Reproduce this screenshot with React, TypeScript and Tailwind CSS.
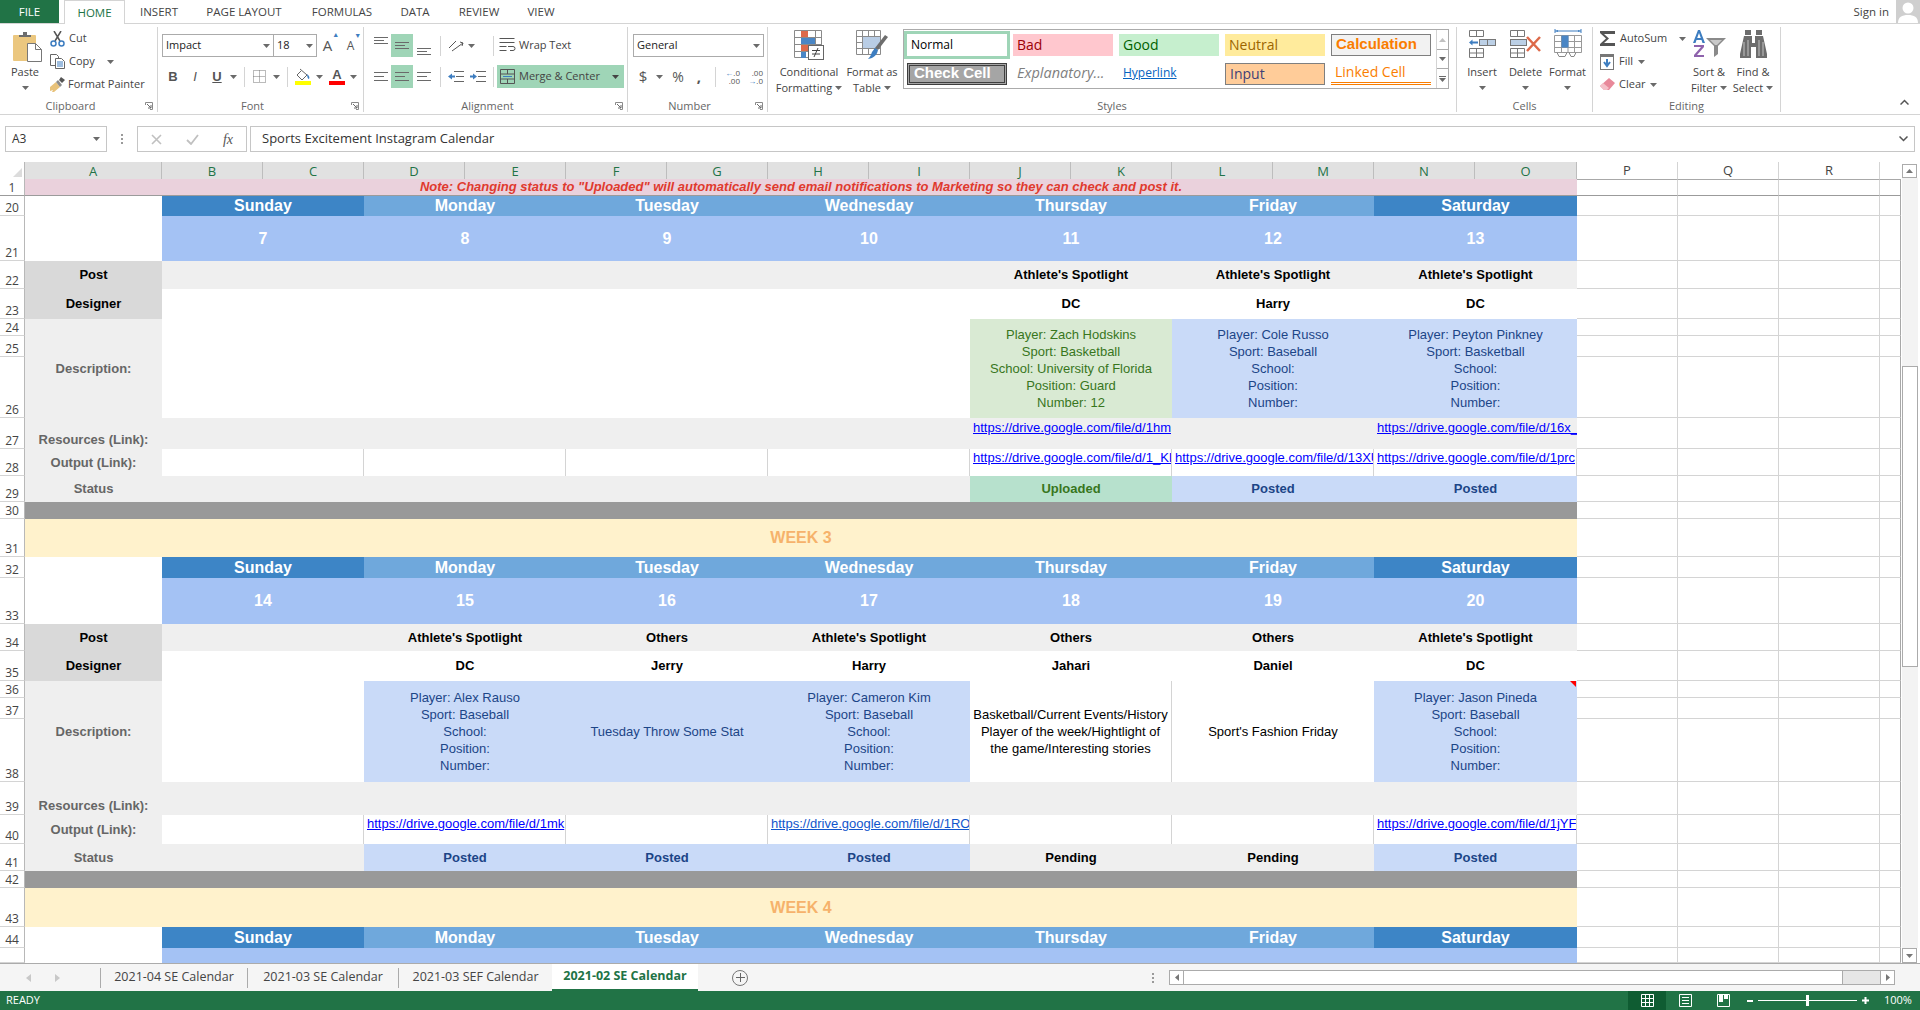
import { Fragment, type ReactNode } from 'react';

const Caret = ({ color = '#6a6a6a' }: { color?: string }) => (
  <svg width="7" height="4" viewBox="0 0 7 4" className="shrink-0">
    <path d="M0 0h7L3.5 4z" fill={color} />
  </svg>
);

const Launcher = () => (
  <svg width="8" height="8" viewBox="0 0 8 8">
    <path d="M.5 3V.5H7.5V7.5H5" fill="none" stroke="#8a8a8a" />
    <path d="M2 2l4 4M6 3v3H3" fill="none" stroke="#6a6a6a" />
  </svg>
);

const Group = ({ label, width, launcher, children }: { label: string; width: string; launcher?: boolean; children: ReactNode }) => (
  <div className={`${width} h-[85px] shrink-0 flex flex-col border-r border-[#d4d4d4]`}>
    <div className="flex-1 min-h-0 flex">{children}</div>
    <div className="h-[13px] flex items-center text-[11px] leading-[13px] text-[#666]">
      <span className="flex-1 text-center">{label}</span>
      {launcher && <span className="w-[16px] flex justify-end pr-[4px]"><Launcher /></span>}
    </div>
  </div>
);

const Big = ({ icon, lines, width }: { icon: ReactNode; lines: [string, string?]; width: string }) => (
  <div className={`${width} shrink-0 flex flex-col items-center text-[11px] leading-[16px] text-[#444]`}>
    <div className="h-[37px] pt-[3px] flex justify-center">{icon}</div>
    <div className="whitespace-nowrap">{lines[0]}</div>
    <div className="h-[16px] flex items-center gap-[3px] whitespace-nowrap">
      {lines[1]}
      <Caret />
    </div>
  </div>
);

const AlignLines = ({ rows }: { rows: [number, number][] }) => (
  <svg width="14" height="12" viewBox="0 0 14 12">
    {rows.map(([x, y], i) => (
      <rect key={i} x={x} y={y} width={14 - (i === 1 && x === 0 ? 4 : 0)} height="1" fill="#6a6a6a" />
    ))}
  </svg>
);

const ICONS = {
  paste: (
    <svg width="29" height="30" viewBox="0 0 29 30">
      <rect x="0" y="3" width="23" height="26" rx="1" fill="#ebc77f" />
      <path d="M6 5V3h4V0h4v3h4v2z" fill="#6d6d6d" />
      <path d="M14.5 11.5h8l6 6v12h-14z" fill="#fff" stroke="#777" />
      <path d="M22.5 11.5v6h6" fill="none" stroke="#777" />
    </svg>
  ),
  cut: (
    <svg width="15" height="16" viewBox="0 0 15 16">
      <path d="M4 0l6 10M11 0L5 10" stroke="#555" strokeWidth="1.5" fill="none" />
      <circle cx="3.5" cy="12.5" r="2.5" fill="none" stroke="#3d7dc0" strokeWidth="1.5" />
      <circle cx="11.5" cy="12.5" r="2.5" fill="none" stroke="#3d7dc0" strokeWidth="1.5" />
    </svg>
  ),
  copy: (
    <svg width="15" height="15" viewBox="0 0 15 15">
      <path d="M.5.5h6l2 2v9H.5z" fill="#fff" stroke="#666" />
      <path d="M5.5 4.5h6l3 3v7h-9z" fill="#fff" stroke="#666" />
      <path d="M7 8h6M7 10h6M7 12h6" stroke="#3d7dc0" />
    </svg>
  ),
  painter: (
    <svg width="15" height="15" viewBox="0 0 15 15">
      <path d="M0 10l6-5 4 5-6 5H2l1-2-3 1z" fill="#e8c27a" />
      <path d="M6 5l4 5 2-2-4-5z" fill="#8a8a8a" />
      <path d="M9 3l2-3 4 3-3 3z" fill="#555" />
    </svg>
  ),
  cond: (
    <svg width="30" height="30" viewBox="0 0 30 30">
      <path d="M.5.5h27v27H.5zM.5 7.5h27M.5 14.5h27M.5 21.5h27M7.5.5v27M21.5.5v27" fill="#fff" stroke="#8a8a8a" />
      <rect x="7" y="1" width="7" height="6" fill="#dd6a4a" />
      <rect x="7" y="8" width="14" height="6" fill="#4a86c5" />
      <rect x="7" y="15" width="10" height="6" fill="#dd6a4a" />
      <rect x="7" y="22" width="5" height="6" fill="#4a86c5" />
      <rect x="14.5" y="15.5" width="15" height="14" fill="#fff" stroke="#666" />
      <path d="M18 20.5h8M18 24h8M24 18l-4 9" stroke="#444" fill="none" />
    </svg>
  ),
  table: (
    <svg width="32" height="30" viewBox="0 0 32 30">
      <path d="M.5.5h24v24H.5zM.5 6.5h24M.5 12.5h24M.5 18.5h24M6.5.5v24M12.5.5v24M18.5.5v24" fill="#fff" stroke="#8a8a8a" />
      <rect x="7" y="7" width="17" height="11" fill="#b9cde5" />
      <path d="M29 5l3 2-10 13-3-2z" fill="#6d6d6d" />
      <path d="M19 18l3 2c-1 5-4 8-10 9 2-2 3-4 4-7z" fill="#3d7dc0" />
    </svg>
  ),
  insert: (
    <svg width="28" height="28" viewBox="0 0 28 28">
      <path d="M1.5.5h14v6h-14zM8.5.5v6M1.5 18.5h14v9h-14zM8.5 18.5v9M1.5 23h14" fill="#fff" stroke="#777" />
      <rect x="11.5" y="9.5" width="16" height="6" fill="#bcd0e6" stroke="#777" />
      <path d="M19.5 9.5v6" stroke="#777" />
      <path d="M1 12.5l3.5-3v2H10v2H4.500v2z" fill="#3d7dc0" />
    </svg>
  ),
  del: (
    <svg width="31" height="28" viewBox="0 0 31 28">
      <path d="M.5.5h14v6H.5zM7.500.5v6M.5 18.500h14v9H.5zM7.500 18.500v9M.5 23h14" fill="#fff" stroke="#777" />
      <rect x=".5" y="9.500" width="16" height="6" fill="#bcd0e6" stroke="#777" />
      <path d="M17 7l13 14M30 7L17 21" stroke="#dd6a4a" strokeWidth="2.500" />
    </svg>
  ),
  format: (
    <svg width="28" height="30" viewBox="0 0 28 30">
      <path d="M1 3h26M1 1v4M27 1v4" stroke="#3d7dc0" />
      <path d="M4 2L1.500 3 4 4zM24 2l2.500 1L24 4z" fill="#3d7dc0" />
      <path d="M.5 7.500h27v17H.5zM.5 13.500h27M.5 19.500h27M7.500 7.500v17M20.500 7.500v17M14 7.500v17" fill="#fff" stroke="#999" />
      <rect x="7.500" y="7.500" width="7" height="12" fill="#4a86c5" />
      <path d="M3 24.500l2 4h6l2-4M15 24.500l2 4h3l2-4" fill="none" stroke="#888" />
    </svg>
  ),
  sort: (
    <svg width="33" height="28" viewBox="0 0 33 28">
      <path d="M0 13L5 0h2l5 13H9.500l-1-3h-5l-1 3zM4.200 8h3.600L6 3z" fill="#3d7dc0" />
      <path d="M1 15h10v2L4 25h7v2H1v-2l7-8H1z" fill="#8e62ac" />
      <path d="M13 8h20l-8 8v8l-4 3V16z" fill="#8a8a8a" />
      <path d="M17 10h12l-5 5h-2z" fill="#c9c9c9" />
    </svg>
  ),
  find: (
    <svg width="27" height="28" viewBox="0 0 27 28">
      <path d="M5 0h6v5H5zM16 0h6v5h-6zM4 6h8v7h3V6h8l4 18v4H16V17h-5v11H0v-4z" fill="#6d6d6d" />
      <path d="M4 12v14M8 10v16M19 10v16M23 12v14" stroke="#fff" strokeWidth=".6" />
    </svg>
  ),
};

const styleBase = 'h-[22px] flex items-center pl-[4px] pb-[2px] whitespace-nowrap overflow-hidden';

const Ribbon = () => (
  <div className="h-[91px] shrink-0 flex pt-[3px] border-b border-[#d4d4d4] font-['Open_Sans',sans-serif]">
    <Group label="Clipboard" width="w-[158px]" launcher>
      <div className="w-[50px] flex flex-col items-center text-[11px] text-[#444]">
        <div className="h-[37px] pt-[5px] pl-[4px]">{ICONS.paste}</div>
        <div className="leading-[16px]">Paste</div>
        <div className="h-[16px] flex items-center"><Caret /></div>
      </div>
      <div className="flex flex-col text-[11px] text-[#444]">
        <div className="h-[23px] flex items-center gap-[4px]">{ICONS.cut} Cut</div>
        <div className="h-[23px] flex items-center gap-[4px]">{ICONS.copy} Copy <span className="ml-[8px]"><Caret /></span></div>
        <div className="h-[23px] flex items-center gap-[3px]">{ICONS.painter} Format Painter</div>
      </div>
    </Group>

    <Group label="Font" width="w-[206px]" launcher>
      <div className="flex flex-col pt-[7px] pl-[4px]">
        <div className="h-[23px] flex items-center">
          <div className="w-[112px] h-full border border-[#ababab] flex items-center justify-between px-[3px] text-[11px] text-[#222]">Impact <Caret /></div>
          <div className="w-[43px] h-full border border-l-0 border-[#ababab] flex items-center justify-between px-[3px] text-[11px] text-[#222]">18 <Caret /></div>
          <span className="ml-[3px] w-[22px] flex justify-center text-[15px] leading-none text-[#555]">A<sup className="text-[7px] text-[#3d7dc0]">▲</sup></span>
          <span className="w-[24px] flex justify-center text-[12px] leading-none text-[#555]">A<sup className="text-[7px] text-[#3d7dc0]">▼</sup></span>
        </div>
        <div className="h-[23px] mt-[8px] flex items-center text-[13px] text-[#555] font-['Liberation_Sans',sans-serif]">
          <span className="w-[22px] text-center font-bold">B</span>
          <span className="w-[22px] text-center italic">I</span>
          <span className="w-[22px] text-center underline font-bold">U</span>
          <span className="w-[16px] pl-[2px]"><Caret /></span>
          <span className="w-[1px] h-[20px] bg-[#d4d4d4] mr-[8px]" />
          <svg width="13" height="13" viewBox="0 0 13 13"><path d="M.5.500h12v12H.500zM6.500.500v12M.5 6.500h12" fill="none" stroke="#777" strokeDasharray="1 1" /></svg>
          <span className="w-[21px] pl-[7px]"><Caret /></span>
          <span className="w-[1px] h-[20px] bg-[#d4d4d4] mr-[7px]" />
          <svg width="16" height="17" viewBox="0 0 16 17"><path d="M5 1l7 6-5 5-5-5 4-4" fill="#fff" stroke="#666" /><path d="M12 6c2 2 3 3 2 5-1 0-2-2-2-5z" fill="#3d7dc0" /><rect y="13" width="16" height="4" fill="#ffff00" /></svg>
          <span className="w-[18px] pl-[5px]"><Caret /></span>
          <span className="w-[16px] flex flex-col items-center text-[13px] leading-[13px] font-semibold text-[#555]">A<span className="w-[16px] h-[4px] bg-[#ff0000]" /></span>
          <span className="pl-[5px]"><Caret /></span>
        </div>
      </div>
    </Group>

    <Group label="Alignment" width="w-[264px]" launcher>
      <div className="flex flex-col pt-[7px] pl-[6px]">
        <div className="h-[23px] flex items-center">
          <span className="w-[21px] h-full flex justify-center pt-[3px]"><AlignLines rows={[[0, 0], [0, 3], [0, 6]]} /></span>
          <span className="w-[22px] h-full bg-[#9fd5b7] flex items-center justify-center"><AlignLines rows={[[0, 2], [0, 5], [0, 8]]} /></span>
          <span className="w-[22px] h-full flex justify-center items-end pb-[1px]"><AlignLines rows={[[0, 4], [0, 7], [0, 10]]} /></span>
          <span className="w-[1px] h-[20px] bg-[#d4d4d4] ml-[5px] mr-[7px]" />
          <svg width="16" height="14" viewBox="0 0 16 14"><path d="M1 9l7-7M4 12L15 4M12 3l3 1-1 3" fill="none" stroke="#555" /></svg>
          <span className="ml-[4px] mr-[18px]"><Caret /></span>
          <span className="w-[1px] h-[20px] bg-[#d4d4d4] mr-[5px]" />
          <span className="flex items-center gap-[3px] text-[11px] text-[#444]">
            <svg width="17" height="15" viewBox="0 0 17 15"><path d="M.5.500h15M.5 4.500h15M.5 8.500h7M.5 12.500h7M9 8.500h5a2 2 0 0 1 0 4h-3" fill="none" stroke="#555" /></svg>
            Wrap Text
          </span>
        </div>
        <div className="h-[23px] mt-[8px] flex items-center">
          <span className="w-[21px] flex justify-center"><AlignLines rows={[[0, 1], [0, 5], [0, 9]]} /></span>
          <span className="w-[22px] h-full bg-[#9fd5b7] flex items-center justify-center"><AlignLines rows={[[0, 1], [0, 5], [0, 9]]} /></span>
          <span className="w-[22px] flex justify-center"><AlignLines rows={[[0, 1], [0, 5], [0, 9]]} /></span>
          <span className="w-[1px] h-[20px] bg-[#d4d4d4] ml-[5px] mr-[7px]" />
          <svg width="16" height="11" viewBox="0 0 16 11"><path d="M6 .500h10M8 5.500h8M6 10.500h10" stroke="#666" /><path d="M0 5.500l4-3v2h3v2H4v2z" fill="#3d7dc0" /></svg>
          <span className="w-[6px]" />
          <svg width="16" height="11" viewBox="0 0 16 11"><path d="M6 .500h10M8 5.500h8M6 10.500h10" stroke="#666" /><path d="M7 5.500l-4-3v2H0v2h3v2z" fill="#3d7dc0" /></svg>
          <span className="w-[1px] h-[20px] bg-[#d4d4d4] ml-[7px] mr-[3px]" />
          <span className="w-[127px] h-full bg-[#9fd5b7] flex items-center pl-[3px] pr-[5px] gap-[4px] text-[11px] text-[#444]">
            <svg width="15" height="15" viewBox="0 0 15 15"><path d="M.5.500h14v14H.500zM.5 5h14M.5 10h14M7.500.500V5M7.500 10v4.500" fill="none" stroke="#555" /><path d="M3 7.500h9" stroke="#3d7dc0" /></svg>
            Merge &amp; Center
            <span className="ml-auto"><Caret color="#444" /></span>
          </span>
        </div>
      </div>
    </Group>

    <Group label="Number" width="w-[140px]" launcher>
      <div className="flex flex-col pt-[7px] pl-[5px]">
        <div className="w-[131px] h-[23px] border border-[#ababab] flex items-center justify-between px-[3px] text-[11px] text-[#222]">General <Caret /></div>
        <div className="h-[23px] mt-[8px] flex items-center text-[#555]">
          <span className="w-[20px] text-center text-[15px]">$</span>
          <span className="w-[15px] pl-[3px]"><Caret /></span>
          <span className="w-[20px] text-center text-[14px]">%</span>
          <span className="w-[22px] text-center text-[15px] font-bold">,</span>
          <span className="w-[1px] h-[20px] bg-[#d4d4d4] ml-[5px] mr-[5px]" />
          <span className="w-[19px] text-[8px] leading-[8px] text-right"><span className="text-[#3d7dc0]">←</span>.0<br />.00</span>
          <span className="w-[4px]" />
          <span className="w-[19px] text-[8px] leading-[8px] text-right">.00<br /><span className="text-[#3d7dc0]">→</span>.0</span>
        </div>
      </div>
    </Group>

    <Group label="Styles" width="w-[689px]">
      <Big icon={ICONS.cond} lines={['Conditional', 'Formatting']} width="w-[70px] ml-[6px]" />
      <Big icon={ICONS.table} lines={['Format as', 'Table']} width="w-[56px]" />
      <div className="ml-[3px] mt-[2px] w-[546px] h-[60px] border border-[#ababab] flex">
        <div className="w-[532px] grid grid-cols-[106px_106px_106px_106px_106px] grid-rows-[30px_28px] text-[14px]">
          <div className="h-[28px] w-[106px] mt-[1px] border-[3px] border-[#9fd5b7] bg-white flex items-center pl-[4px] text-[12px] text-black">Normal</div>
          <div className="flex items-center"><div className={`${styleBase} w-[100px] ml-[3px] bg-[#ffc7ce] text-[#9c0006]`}>Bad</div></div>
          <div className="flex items-center"><div className={`${styleBase} w-[100px] ml-[3px] bg-[#c6efce] text-[#006100]`}>Good</div></div>
          <div className="flex items-center"><div className={`${styleBase} w-[100px] ml-[3px] bg-[#ffeb9c] text-[#9c6500]`}>Neutral</div></div>
          <div className="flex items-center"><div className={`${styleBase} w-[100px] ml-[3px] border border-[#7f7f7f] bg-[#f2f2f2] text-[15px] font-bold text-[#fa7d00] font-['Liberation_Sans',sans-serif]`}>Calculation</div></div>
          <div className="flex items-center pl-[3px]"><div className={`${styleBase} w-[100px] border-[3px] border-double border-[#3f3f3f] bg-[#a5a5a5] text-[15px] font-bold text-white font-['Liberation_Sans',sans-serif]`}>Check Cell</div></div>
          <div className="flex items-center pl-[7px] pb-[2px] italic text-[14.500px] text-[#7f7f7f]">Explanatory...</div>
          <div className="flex items-center pl-[7px] pb-[2px] text-[12px] underline text-[#0563c1]">Hyperlink</div>
          <div className="flex items-center"><div className={`${styleBase} w-[100px] ml-[3px] border border-[#7f7f7f] bg-[#ffcc99] text-[#3f3f76]`}>Input</div></div>
          <div className="flex items-center"><div className={`${styleBase} w-[100px] ml-[3px] border-b-[3px] border-double border-[#fa7d00] text-[#fa7d00]`}>Linked Cell</div></div>
        </div>
        <div className="flex-1 flex flex-col border-l border-[#d4d4d4]">
          <div className="h-[20px] flex items-center justify-center border-b border-[#ababab]"><svg width="7" height="4" viewBox="0 0 7 4"><path d="M0 4h7L3.500 0z" fill="#c0c0c0" /></svg></div>
          <div className="h-[19px] flex items-center justify-center border-b border-[#ababab]"><Caret /></div>
          <div className="flex-1 flex flex-col items-center justify-center gap-[1px]"><span className="w-[7px] h-[1px] bg-[#6a6a6a]" /><Caret /></div>
        </div>
      </div>
    </Group>

    <Group label="Cells" width="w-[136px]">
      <div className="ml-[2px] flex">
        <div className="w-[46px] flex flex-col items-center text-[11px] leading-[16px] text-[#444]"><div className="h-[37px] pt-[3px]">{ICONS.insert}</div>Insert<div className="h-[16px] flex items-center"><Caret /></div></div>
        <div className="w-[41px] flex flex-col items-center text-[11px] leading-[16px] text-[#444]"><div className="h-[37px] pt-[3px]">{ICONS.del}</div>Delete<div className="h-[16px] flex items-center"><Caret /></div></div>
        <div className="w-[43px] flex flex-col items-center text-[11px] leading-[16px] text-[#444]"><div className="h-[37px] pt-[1px]">{ICONS.format}</div>Format<div className="h-[16px] flex items-center"><Caret /></div></div>
      </div>
    </Group>

    <Group label="Editing" width="w-[188px]">
      <div className="w-[94px] pl-[7px] flex flex-col text-[11px] text-[#444]">
        <div className="h-[23px] flex items-center gap-[4px]">
          <svg width="16" height="15" viewBox="0 0 16 15"><path d="M0 0h15v3H4l5 4.500L4 12h11v3H0v-2l6-5.500L0 2z" fill="#555" /></svg>
          AutoSum <span className="ml-[8px]"><Caret /></span>
        </div>
        <div className="h-[23px] flex items-center gap-[5px]">
          <svg width="14" height="16" viewBox="0 0 14 16"><rect x=".5" y=".5" width="13" height="15" fill="#fff" stroke="#777" /><rect width="14" height="3" fill="#777" /><path d="M7 5v6M4 8l3 4 3-4" fill="none" stroke="#3d7dc0" strokeWidth="2" /></svg>
          Fill <Caret />
        </div>
        <div className="h-[23px] flex items-center gap-[4px]">
          <svg width="15" height="14" viewBox="0 0 15 14"><path d="M9 0l6 5-6 7H4L0 8z" fill="#e8899a" /><path d="M3 5l6 5-2 2H4L0 8z" fill="#f4c0c8" /></svg>
          Clear <Caret />
        </div>
      </div>
      <Big icon={ICONS.sort} lines={['Sort &', 'Filter']} width="w-[44px]" />
      <Big icon={ICONS.find} lines={['Find &', 'Select']} width="w-[44px]" />
    </Group>

    <div className="flex-1 flex items-end justify-end pr-[11px] pb-[9px]">
      <svg width="9" height="6" viewBox="0 0 9 6"><path d="M.5 5.500l4-4 4 4" fill="none" stroke="#555" strokeWidth="1.500" /></svg>
    </div>
  </div>
);

const TABS = [
  ['INSERT', 'w-[68px]'],
  ['PAGE LAYOUT', 'w-[102px]'],
  ['FORMULAS', 'w-[94px]'],
  ['DATA', 'w-[52px]'],
  ['REVIEW', 'w-[76px]'],
  ['VIEW', 'w-[48px]'],
];

const TopTabs = () => (
  <div className="h-[24px] shrink-0 flex border-b border-[#d4d4d4] font-['Open_Sans',sans-serif] text-[11.500px]">
    <div className="w-[59px] h-[23px] bg-[#217346] text-white flex items-center justify-center">FILE</div>
    <div className="w-[61px] h-[24px] ml-[5px] bg-white border border-b-0 border-[#d4d4d4] text-[#217346] flex items-center justify-center">HOME</div>
    {TABS.map(([name, w]) => (
      <div key={name} className={`${w} h-[23px] text-[#444] flex items-center justify-center`}>{name}</div>
    ))}
    <div className="flex-1 h-[23px] flex items-center justify-end text-[#444]">
      Sign in
      <div className="ml-[7px] w-[24px] h-[23px] bg-[#cfcfcf] overflow-hidden flex justify-center">
        <svg width="24" height="23" viewBox="0 0 24 23"><circle cx="12" cy="8" r="5.500" fill="#fff" /><path d="M2 23c0-6 4-8 10-8s10 2 10 8z" fill="#fff" /></svg>
      </div>
    </div>
  </div>
);

const FormulaBar = () => (
  <div className="h-[47px] shrink-0 pt-[11px] pb-[10px] flex font-['Open_Sans',sans-serif]">
    <div className="ml-[5px] w-[102px] border border-[#c6c6c6] flex items-center justify-between px-[6px] text-[12px] text-[#333]">A3 <Caret /></div>
    <div className="w-[30px] flex flex-col items-center justify-center gap-[2px]">
      <span className="w-[2px] h-[2px] bg-[#9a9a9a]" /><span className="w-[2px] h-[2px] bg-[#9a9a9a]" /><span className="w-[2px] h-[2px] bg-[#9a9a9a]" />
    </div>
    <div className="w-[110px] border border-[#c6c6c6] flex items-center">
      <span className="w-[36px] flex justify-center"><svg width="11" height="11" viewBox="0 0 11 11"><path d="M1 1l9 9M10 1l-9 9" stroke="#c0c0c0" strokeWidth="1.600" /></svg></span>
      <span className="w-[36px] flex justify-center"><svg width="13" height="11" viewBox="0 0 13 11"><path d="M1 6l4 4 7-9" fill="none" stroke="#c0c0c0" strokeWidth="1.800" /></svg></span>
      <span className="w-[36px] text-center font-['Liberation_Serif',serif] italic text-[14px] text-[#555]">fx</span>
    </div>
    <div className="ml-[3px] w-[1665px] border border-[#c6c6c6] flex items-center justify-between pl-[11px] pr-[6px] text-[13px] text-[#333]">
      Sports Excitement Instagram Calendar
      <svg width="9" height="6" viewBox="0 0 9 6"><path d="M.5.500l4 4 4-4" fill="none" stroke="#555" strokeWidth="1.500" /></svg>
    </div>
  </div>
);

const RowNum = ({ n, first }: { n?: number; first?: boolean }) => (
  <div className={`flex items-end justify-center border-r border-b border-r-[#b8b8b8] font-['Open_Sans',sans-serif] text-[12px] leading-[15px] text-[#444] ${first ? 'border-b-[#9b9b9b]' : 'border-b-[#d4d4d4]'}`}>
    {n}
  </div>
);

const Blanks = ({ first }: { first?: boolean }) => {
  const edge = first ? 'border-t border-t-[#a8a8a8] border-b-[#9b9b9b]' : 'border-b-[#d4d4d4]';
  return (
    <>
      <div className={`border-b border-r border-r-[#d4d4d4] ${edge}`} />
      <div className={`border-b border-r border-r-[#d4d4d4] ${edge}`} />
      <div className={`border-b border-r border-r-[#d4d4d4] ${edge}`} />
      <div className={`border-b border-r border-r-[#a8a8a8] ${edge}`} />
    </>
  );
};

type Desc = { tone: 'blue' | 'green' | 'plain' | 'none'; lines: string[]; marker?: boolean; edge?: boolean };
type Day = { post?: string; designer?: string; desc?: Desc; res?: string; out?: string; status?: string; linkColor?: string };

const label = 'flex items-center justify-center font-bold';
const grayLabel = `${label} bg-[#efefef] text-[#666666]`;
const NAMES = ['Sunday', 'Monday', 'Tuesday', 'Wednesday', 'Thursday', 'Friday', 'Saturday'];
const DRIVE = 'https://drive.google.com/file/d/';

const player = (name: string, sport: string, school = '', position = '', number = ''): string[] => [
  `Player: ${name}`,
  `Sport: ${sport}`,
  `School: ${school}`,
  `Position: ${position}`,
  `Number: ${number}`,
];

const Link = ({ href, color, pad }: { href?: string; color?: string; pad?: string }) =>
  href ? (
    <span className={`block pl-[3px] leading-[17px] whitespace-nowrap overflow-hidden underline ${pad ?? ''} ${color ?? 'text-[#0000ff]'}`}>{href}</span>
  ) : null;

const HeaderRows = ({ start, dates }: { start: number; dates?: number[] }) => (
  <>
    <RowNum n={start} />
    <div className="bg-white" />
    {NAMES.map((d, i) => (
      <div key={d} className={`flex items-center justify-center text-[16px] font-bold text-white ${i === 0 || i === 6 ? 'bg-[#3d85c6]' : 'bg-[#6fa8dc]'}`}>{d}</div>
    ))}
    <Blanks />
    {dates ? <RowNum n={start + 1} /> : <RowNum />}
    <div className="bg-white" />
    {dates
      ? dates.map((d) => <div key={d} className="bg-[#a4c2f4] flex items-center justify-center text-[16px] font-bold text-white">{d}</div>)
      : NAMES.map((d) => <div key={d} className="bg-[#a4c2f4]" />)}
    <Blanks />
  </>
);

const DescCell = ({ desc }: { desc?: Desc }) => {
  const tone = {
    blue: 'bg-[#c9daf8] text-[#1c4587]',
    green: 'bg-[#d9ead3] text-[#38761d]',
    plain: 'bg-white text-black',
    none: 'bg-white',
  }[desc?.tone ?? 'none'];
  return (
    <div className={`row-span-3 relative flex flex-col items-center justify-center leading-[17px] whitespace-nowrap ${tone} ${desc?.edge ? 'border-r border-[#d4d4d4]' : ''}`}>
      {desc?.lines.map((l) => <span key={l}>{l}</span>)}
      {desc?.marker && (
        <svg width="6" height="6" viewBox="0 0 6 6" className="absolute top-0 right-[1px]"><path d="M0 0h6v6z" fill="#ff0000" /></svg>
      )}
    </div>
  );
};

const statusTone = (s?: string) =>
  s === 'Posted' ? 'bg-[#c9daf8] text-[#1c4587]' : s === 'Uploaded' ? 'bg-[#b7e1cd] text-[#38761d]' : 'bg-[#efefef] text-black';

const Week = ({ start, dates, days }: { start: number; dates: number[]; days: Day[] }) => (
  <>
    <HeaderRows start={start} dates={dates} />

    <RowNum n={start + 2} />
    <div className={`${label} bg-[#d9d9d9] text-black`}>Post</div>
    {days.map((d, i) => <div key={i} className={`${label} bg-[#efefef] text-black`}>{d.post}</div>)}
    <Blanks />

    <RowNum n={start + 3} />
    <div className={`${label} bg-[#d9d9d9] text-black`}>Designer</div>
    {days.map((d, i) => <div key={i} className={`${label} bg-white text-black`}>{d.designer}</div>)}
    <Blanks />

    <RowNum n={start + 4} />
    <div className={`${grayLabel} row-span-3`}>Description:</div>
    {days.map((d, i) => <DescCell key={i} desc={d.desc} />)}
    <Blanks />
    <RowNum n={start + 5} />
    <Blanks />
    <RowNum n={start + 6} />
    <Blanks />

    <RowNum n={start + 7} />
    <div className="bg-[#efefef] text-[#666666] font-bold flex items-end justify-center pb-[1px] leading-[17px]">Resources (Link):</div>
    {days.map((d, i) => <div key={i} className="bg-[#efefef] min-w-0"><Link href={d.res} pad="pt-[1px]" /></div>)}
    <Blanks />

    <RowNum n={start + 8} />
    <div className={grayLabel}>Output (Link):</div>
    {days.map((d, i) => (
      <div key={i} className="bg-white min-w-0 border-r border-[#d4d4d4]"><Link href={d.out} color={d.linkColor} /></div>
    ))}
    <Blanks />

    <RowNum n={start + 9} />
    <div className={grayLabel}>Status</div>
    {days.map((d, i) => <div key={i} className={`${label} ${statusTone(d.status)}`}>{d.status}</div>)}
    <Blanks />

    <RowNum n={start + 10} />
    <div className="col-span-8 bg-[#999999]" />
    <Blanks />
  </>
);

const WeekTitle = ({ n, title }: { n: number; title: string }) => (
  <Fragment>
    <RowNum n={n} />
    <div className="col-span-8 bg-[#fff2cc] flex items-center justify-center text-[16px] font-bold text-[#f6b26b]">{title}</div>
    <Blanks />
  </Fragment>
);

const spot = "Athlete's Spotlight";
const blue = (lines: string[], marker?: boolean): Desc => ({ tone: 'blue', lines, marker });

const WEEK_2: Day[] = [
  {},
  {},
  {},
  {},
  {
    post: spot,
    designer: 'DC',
    desc: { tone: 'green', lines: player('Zach Hodskins', 'Basketball', 'University of Florida', 'Guard', '12') },
    res: `${DRIVE}1hm`,
    out: `${DRIVE}1_KI`,
    status: 'Uploaded',
  },
  {
    post: spot,
    designer: 'Harry',
    desc: blue(player('Cole Russo', 'Baseball')),
    out: `${DRIVE}13XU`,
    status: 'Posted',
  },
  {
    post: spot,
    designer: 'DC',
    desc: blue(player('Peyton Pinkney', 'Basketball')),
    res: `${DRIVE}16x_`,
    out: `${DRIVE}1prc`,
    status: 'Posted',
  },
];

const WEEK_3: Day[] = [
  {},
  { post: spot, designer: 'DC', desc: blue(player('Alex Rauso', 'Baseball')), out: `${DRIVE}1mk`, status: 'Posted' },
  { post: 'Others', designer: 'Jerry', desc: blue(['Tuesday Throw Some Stat']), status: 'Posted' },
  { post: spot, designer: 'Harry', desc: blue(player('Cameron Kim', 'Baseball')), out: `${DRIVE}1RO`, linkColor: 'text-[#1155cc]', status: 'Posted' },
  {
    post: 'Others',
    designer: 'Jahari',
    desc: { tone: 'plain', edge: true, lines: ['Basketball/Current Events/History', 'Player of the week/Hightlight of', 'the game/Interesting stories'] },
    status: 'Pending',
  },
  { post: 'Others', designer: 'Daniel', desc: { tone: 'plain', lines: ["Sport's Fashion Friday"] }, status: 'Pending' },
  { post: spot, designer: 'DC', desc: blue(player('Jason Pineda', 'Baseball'), true), out: `${DRIVE}1jYF`, status: 'Posted' },
];

const COLS = ['A', 'B', 'C', 'D', 'E', 'F', 'G', 'H', 'I', 'J', 'K', 'L', 'M', 'N', 'O'];

const Sheet = () => (
  <div className="h-[801px] shrink-0 flex overflow-hidden">
    <div className="w-[1901px] shrink-0 grid grid-cols-[25px_137px_repeat(6,202px)_203px_101px_101px_101px_21px] grid-rows-[17px_17px_20px_45px_28px_30px_17px_21px_61px_31px_27px_26px_17px_38px_21px_46px_27px_30px_17px_21px_63px_33px_29px_27px_17px_39px_21px_15px] font-['Liberation_Sans',Arial,sans-serif] text-[13px]">
      {/* column letters */}
      <div className="flex items-end justify-end border-r border-[#b8b8b8] pr-[2px] pb-[2px]">
        <svg width="9" height="9" viewBox="0 0 9 9"><path d="M9 0v9H0z" fill="#dcdcdc" /></svg>
      </div>
      <div className="col-span-8 grid grid-cols-[137px_repeat(13,101px)_102px]">
        {COLS.map((c) => (
          <div key={c} className="bg-[#e1e1e1] border-r border-b-2 border-r-[#bdbdbd] border-b-[#217346] flex items-center justify-center font-['Open_Sans',sans-serif] text-[13px] text-[#217346]">{c}</div>
        ))}
      </div>
      {['P', 'Q', 'R'].map((c) => (
        <div key={c} className="border-r border-[#d4d4d4] flex items-center justify-center font-['Open_Sans',sans-serif] text-[13px] text-[#444]">{c}</div>
      ))}
      <div />

      <RowNum n={1} first />
      <div className="col-span-8 bg-[#ead1dc] border-b border-[#9b9b9b] flex items-center justify-center font-bold italic text-[#e03a2e]">
        Note: Changing status to "Uploaded" will automatically send email notifications to Marketing so they can check and post it.
      </div>
      <Blanks first />

      <Week start={20} dates={[7, 8, 9, 10, 11, 12, 13]} days={WEEK_2} />
      <WeekTitle n={31} title="WEEK 3" />
      <Week start={32} dates={[14, 15, 16, 17, 18, 19, 20]} days={WEEK_3} />
      <WeekTitle n={43} title="WEEK 4" />
      <HeaderRows start={44} />
    </div>

    <div className="ml-[1px] w-[18px] flex flex-col">
      <div className="h-[2px]" />
      <div className="h-[14px] w-[15px] bg-white border border-[#ababab] flex items-center justify-center"><svg width="7" height="4" viewBox="0 0 7 4"><path d="M0 4h7L3.500 0z" fill="#777" /></svg></div>
      <div className="flex-1 bg-[#f3f3f3] w-[16px] flex flex-col">
        <div className="h-[188px]" />
        <div className="h-[301px] bg-white border border-[#ababab]" />
        <div className="flex-1" />
      </div>
      <div className="h-[15px] w-[15px] bg-white border border-[#ababab] flex items-center justify-center"><Caret color="#777" /></div>
    </div>
  </div>
);

const SHEETS = [
  ['2021-04 SE Calendar', 'w-[147px]'],
  ['2021-03 SE Calendar', 'w-[151px]'],
  ['2021-03 SEF Calendar', 'w-[154px]'],
];

const TabBar = () => (
  <div className="h-[28px] shrink-0 bg-[#f5f5f5] border-t border-[#ababab] flex items-center font-['Open_Sans',sans-serif] text-[12.500px] text-[#444]">
    <div className="w-[100px] flex items-center pl-[26px] gap-[24px]">
      <svg width="5" height="8" viewBox="0 0 5 8"><path d="M5 0v8L0 4z" fill="#c8c8c8" /></svg>
      <svg width="5" height="8" viewBox="0 0 5 8"><path d="M0 0v8l5-4z" fill="#c8c8c8" /></svg>
    </div>
    {SHEETS.map(([name, w]) => (
      <div key={name} className={`${w} h-[20px] border-l border-[#ababab] flex items-center justify-center whitespace-nowrap`}>{name}</div>
    ))}
    <div className="w-[146px] h-full bg-white border-b-2 border-[#217346] flex items-center justify-center font-bold text-[#217346] whitespace-nowrap">2021-02 SE Calendar</div>
    <div className="ml-[34px] w-[16px] h-[16px] rounded-full border border-[#777] flex items-center justify-center">
      <svg width="9" height="9" viewBox="0 0 9 9"><path d="M4.500 0v9M0 4.500h9" stroke="#666" /></svg>
    </div>
    <div className="ml-[404px] flex flex-col gap-[2px]">
      <span className="w-[2px] h-[2px] bg-[#9a9a9a]" /><span className="w-[2px] h-[2px] bg-[#9a9a9a]" /><span className="w-[2px] h-[2px] bg-[#9a9a9a]" />
    </div>
    <div className="ml-[15px] w-[726px] h-[15px] border border-[#ababab] flex bg-[#e6e6e6]">
      <div className="w-[14px] bg-white border-r border-[#ababab] flex items-center justify-center"><svg width="4" height="7" viewBox="0 0 4 7"><path d="M4 0v7L0 3.500z" fill="#777" /></svg></div>
      <div className="w-[659px] bg-white border-r border-[#ababab]" />
      <div className="flex-1" />
      <div className="w-[14px] bg-white border-l border-[#ababab] flex items-center justify-center"><svg width="4" height="7" viewBox="0 0 4 7"><path d="M0 0v7l4-3.500z" fill="#777" /></svg></div>
    </div>
  </div>
);

const StatusBar = () => (
  <div className="h-[19px] shrink-0 bg-[#217346] flex items-center font-['Open_Sans',sans-serif] text-[11px] text-white">
    <span className="pl-[6px]">READY</span>
    <div className="ml-auto w-[38px] h-full bg-[#0f5c32] flex items-center justify-center">
      <svg width="13" height="13" viewBox="0 0 13 13"><path d="M.5.500h12v12H.500zM4.500.500v12M8.500.500v12M.5 4.500h12M.5 8.500h12" fill="none" stroke="#fff" /></svg>
    </div>
    <div className="w-[38px] flex justify-center">
      <svg width="13" height="13" viewBox="0 0 13 13"><path d="M.5.500h12v12H.500z" fill="none" stroke="#fff" /><path d="M3 3.500h7M3 6.500h7M3 9.500h7" stroke="#fff" /></svg>
    </div>
    <div className="w-[38px] flex justify-center">
      <svg width="13" height="13" viewBox="0 0 13 13"><path d="M.5.500h12v12H.500z" fill="none" stroke="#fff" /><path d="M2 1h4v7H2zM7 1h4v4H7z" fill="#fff" /></svg>
    </div>
    <div className="ml-[5px] w-[122px] flex items-center">
      <span className="w-[6px] h-[2px] bg-white" />
      <span className="mx-[5px] w-[99px] h-[1px] bg-white flex items-center justify-center"><span className="w-[3px] h-[11px] bg-white" /></span>
      <svg width="7" height="7" viewBox="0 0 7 7"><path d="M3.500 0v7M0 3.500h7" stroke="#fff" strokeWidth="2" /></svg>
    </div>
    <span className="ml-[15px] w-[36px]">100%</span>
  </div>
);

export default function App() {
  return (
    <div className="w-[1920px] h-[1010px] bg-white flex flex-col overflow-hidden">
      <TopTabs />
      <Ribbon />
      <FormulaBar />
      <Sheet />
      <TabBar />
      <StatusBar />
    </div>
  );
}
